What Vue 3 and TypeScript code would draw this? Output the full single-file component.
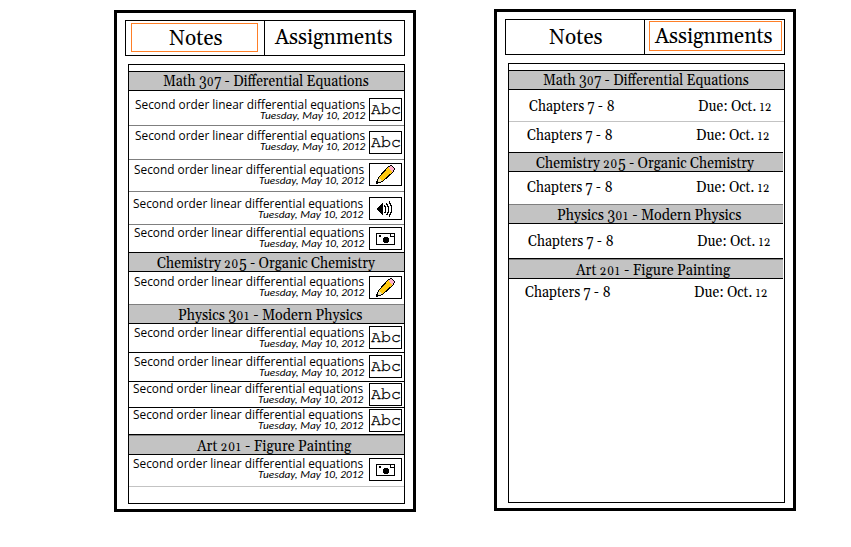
<script setup lang="ts">
import type { Directive } from 'vue'

type Icon = 'abc' | 'pencil' | 'sound' | 'camera'
interface Line { kind: 'head' | 'note' | 'task'; h: number; line: string; text?: string; x?: number; w?: number; top: number; icon?: Icon; iconTop?: number; end?: number; short?: boolean }
interface Panel { id: string; tab: number; lines: Line[] }

const BLACK = '#000'
const GREY = '#7f7f7f'
const LIGHT = '#c3c3c3'

const head = (text: string, h: number, x: number, w: number, top: number, line = BLACK, short = false): Line =>
  ({ kind: 'head', text, h, x, w, top, line, short })
const note = (h: number, top: number, end: number, icon: Icon, iconTop: number, line: string): Line =>
  ({ kind: 'note', h, top, end, icon, iconTop, line })
const task = (h: number, top: number, x: number, line: string): Line => ({ kind: 'task', h, top, x, line })

const M = 'Math 307 - Differential Equations'
const C = 'Chemistry 205 - Organic Chemistry'
const P = 'Physics 301 - Modern Physics'
const A = 'Art 201 - Figure Painting'

const panels: Panel[] = [
  {
    id: 'notes', tab: 0, lines: [
      head(M, 20, 34, 206, 0),
      note(35, 8, 365.6, 'abc', 7, GREY),
      note(34, 4, 365, 'abc', 5, GREY),
      note(32, 4, 364, 'pencil', 3, GREY),
      note(33, 6, 363, 'sound', 5, GREY),
      note(27, 2, 364, 'camera', 2, 'transparent'),
      head(C, 20, 28, 218, 1),
      note(33, 4, 364, 'pencil', 4, GREY),
      head(P, 19, 49, 184, 0, LIGHT),
      note(29, 3, 364, 'abc', 2, BLACK),
      note(29, 3, 364, 'abc', 2, BLACK),
      note(26, 1, 363, 'abc', 1, BLACK),
      note(26, 1, 363, 'abc', 1, 'transparent'),
      head(A, 21, 68, 154, 2),
      note(32, 3, 363, 'camera', 3, LIGHT),
    ],
  },
  {
    id: 'tasks', tab: 1, lines: [
      head(M, 20, 34, 206, 0),
      task(32, 7, 20, LIGHT),
      task(30, 4, 18, 'transparent'),
      head(C, 20, 27, 218, 1, BLACK, true),
      task(32, 6, 18, 'transparent'),
      head(P, 20, 48, 184, 1, GREY, true),
      task(34, 8, 19, 'transparent'),
      head(A, 21, 67, 154, 2, BLACK, true),
      task(32, 4, 16, 'transparent'),
    ],
  },
]

/* Separates 0, 1 and 2, which old-style figures set at x-height. */
const parts = (s: string) => s.split(/([012]+)/).filter(Boolean).map(t => ({ t, low: /^[012]+$/.test(t) }))

/* Stretches a text run to the given width in pixels. */
const vFit: Directive<HTMLElement, number> = {
  mounted(el, { value }) {
    el.style.transform = `scaleX(${value / el.offsetWidth})`
  },
}
</script>

<template>
  <main class="page">
    <section v-for="p in panels" :key="p.id" class="panel" :class="p.id">
      <nav class="tabs">
        <div class="tab first" :class="{ on: p.tab === 0 }"><span v-fit="53" class="serif run">Notes</span></div>
        <div class="tab second" :class="{ on: p.tab === 1 }"><span v-fit="118" class="serif run">Assignments</span></div>
      </nav>
      <div class="list">
        <div v-for="(l, i) in p.lines" :key="i" class="line" :class="[l.kind, { short: l.short, thick: l.h === 21 }]" :style="{ height: l.h + 'px' }">
          <div v-if="l.kind === 'head'" class="bar" :style="{ borderTopColor: l.line, paddingLeft: l.x + 'px', paddingTop: l.top + 'px' }">
            <span v-fit="l.w!" class="serif run"><span v-for="(g, k) in parts(l.text!)" :key="k" :class="{ small: g.low }">{{ g.t }}</span></span>
          </div>
          <template v-else-if="l.kind === 'note'">
            <div class="words" :style="{ paddingTop: l.top + 'px', width: l.end! - 129 + 'px' }">
              <span v-fit="230" class="run title">Second order linear differential equations</span>
              <span v-fit="105" class="run date">Tuesday, May 10, 2012</span>
            </div>
            <div class="icon" :style="{ marginTop: l.iconTop + 'px' }">
              <span v-if="l.icon === 'abc'" v-fit="30" class="run abc">Abc</span>
              <svg v-else-if="l.icon === 'pencil'" width="31" height="21" viewBox="0 0 31 21" shape-rendering="crispEdges">
                <path d="M6.5 19.500L8.500 13.500L18.500 2.500L21.500 1.500L24.500 4.500L23.500 7.500L12.500 17.500Z" fill="#ffc90e" stroke="#000" />
                <path d="M19 3L21 2L24 5L23 7L22 8L18 4Z" fill="#ffaec9" />
                <path d="M9 14L12 17L8 19L7 18Z" fill="#efe4b0" />
                <path d="M6 17h2v1h1v1h-1v1h-2z" />
              </svg>
              <svg v-else-if="l.icon === 'sound'" width="31" height="21" viewBox="0 0 31 21" shape-rendering="crispEdges">
                <path d="M7 10h1V9h1V8h1V7h1V6h1V5h1v12h-1v-1h-1v-1h-1v-1H9v-1H8v-1H7z" />
                <path d="M14.500 7v1h1v6h-1v1M16.500 5v1h1v2h1v6h-1v2h-1v1M18.500 3.500h1v2h1v2h1v7h-1v2h-1v2h-1" fill="none" stroke="#000" />
              </svg>
              <svg v-else width="31" height="21" viewBox="0 0 31 21" shape-rendering="crispEdges">
                <path d="M6.500 5.500h18v11h-18zM20.500 5.500v3h4" fill="none" stroke="#000" />
                <path d="M9 7h2v2h-2zM14 9h4v1h1v4h-1v1h-4v-1h-1v-4h1z" />
              </svg>
            </div>
          </template>
          <div v-else class="task-row" :style="{ paddingLeft: l.x + 'px', paddingTop: l.top + 'px' }">
            <span class="slot"><span v-fit="86" class="serif run">Chapters 7 - 8</span></span>
            <span v-fit="74" class="serif run">Due: Oct. <span class="small">12</span></span>
          </div>
          <i v-if="l.kind !== 'head'" class="rule" :style="{ background: l.line }"></i>
        </div>
      </div>
    </section>
  </main>
</template>

<style>
body { background: #fff; }
</style>

<style scoped>
*, *::before { box-sizing: border-box; }
.page { display: flex; gap: 78px; height: 547px; padding: 10px 0 0 114px; color: #000; overflow: hidden; }
.panel { width: 302px; height: 502px; border: 3px solid #000; padding: 7px 8px 0; flex: none; }
.tasks { margin-top: -1px; }
.tabs { display: flex; width: 280px; height: 36px; border: 1px solid #000; }
.tab { height: 34px; padding-top: 2px; flex: none; }
.first { width: 139px; border-right: 1px solid #000; padding-left: 5px; }
.second { width: 139px; padding-left: 4px; }
.tab .run { font-size: 22px; line-height: 26px; margin: 3px 0 0 38px; }
.tab.second .run { margin: 2px 0 0 6px; }
.on::before { content: ''; display: block; border: 1px solid #ff7f27; }
.first.on::before { width: 127px; height: 29px; margin-bottom: -29px; }
.second.on::before { width: 133px; height: 30px; margin: -1px 0 -29px; }
.list { width: 277px; height: 440px; margin: 8px 0 0 3px; border: 1px solid #000; padding-top: 6px; }
.line { display: flex; align-items: flex-start; position: relative; }
.serif { font-family: Gelasio, Georgia, 'Liberation Serif', serif; font-variant-numeric: oldstyle-nums; font-size: 16px; line-height: 18px; }
.run { display: inline-block; white-space: pre; transform-origin: 0 0; flex: none; }
.small { font-size: 0.82em; line-height: 1; letter-spacing: 0.8px; }
.bar { width: 100%; height: 100%; background: #c3c3c3; border-top: 1px solid #000; border-bottom: 1px solid #000; }
.thick .bar { box-shadow: inset 0 1px #7f7f7f; }
.short .bar { width: 274px; }
.bar .run { display: block; width: max-content; }
.words { display: flex; flex-direction: column; align-items: flex-end; height: calc(100% - 1px); }
.words .run { transform-origin: 100% 0; }
.title { font: 12px/12px 'Open Sans', sans-serif; }
.date { font: italic 10.500px/10px Carlito, Lato, sans-serif; }
.icon { width: 33px; height: 23px; border: 1px solid #000; margin-left: auto; margin-right: 2px; flex: none; display: flex; }
.abc { font: 15.500px/21px 'Nimbus Mono PS', FreeMono, 'Courier New', 'Liberation Mono', monospace; margin: 0 0 0 1px; -webkit-text-stroke: 0.3px #000; }
.task-row { display: flex; width: 100%; height: calc(100% - 1px); }
.slot { width: 169px; flex: none; }
.rule { position: absolute; left: 0; bottom: 0; width: 100%; height: 1px; }
</style>
